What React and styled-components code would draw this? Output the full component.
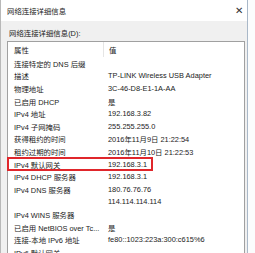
import React from 'react';
import styled, {createGlobalStyle} from 'styled-components';

const Global = createGlobalStyle`
  html, body {
    margin: 0;
    padding: 0;
    background: #fbfcfd;
    overflow: hidden;
  }
  body {
    font-family: 'Segoe UI', 'Liberation Sans', 'Noto Sans CJK SC', sans-serif;
    color: #1b1b1b;
  }
`;

const Window = styled.div`
  width: 248px;
  height: 253px;
  border-left: 1px solid #b8b8b8;
  border-right: 1px solid #a9b8c8;
  box-sizing: border-box;
  background: #f0f0f0;
  display: flex;
  flex-direction: column;
  overflow: hidden;
`;

const TitleBar = styled.div`
  height: 21px;
  flex: none;
  background: #fff;
  display: flex;
  align-items: center;
  justify-content: space-between;
  padding: 0 4px 0 6px;
  font-size: 7.4px;
`;

const Close = styled.span`
  font-size: 10px;
  color: #333;
  line-height: 1;
`;

const Body = styled.div`
  flex: 1;
  padding: 6px 2px 0 6px;
  display: flex;
  flex-direction: column;
`;

const Caption = styled.div`
  font-size: 7.4px;
  height: 14px;
  line-height: 14px;
  padding-left: 2px;
`;

const List = styled.div`
  flex: 1;
  background: #fff;
  border: 1px solid #a0a0a0;
  border-bottom: none;
  font-size: 7.4px;
`;

const Row = styled.div`
  position: relative;
  display: grid;
  grid-template-columns: 95px 1fr;
  height: ${p => (p.$head ? '15px' : '12.6px')};
  align-items: center;
  white-space: nowrap;

  &::after {
    content: '';
    display: ${p => (p.$marked ? 'block' : 'none')};
    position: absolute;
    left: -1px;
    top: -1px;
    width: 146px;
    height: 14px;
    border: 2px solid #e0262b;
    box-sizing: border-box;
  }
`;

const Cell = styled.div`
  padding-left: ${p => (p.$value ? '5px' : '6px')};
  height: 100%;
  display: flex;
  align-items: center;
  border-left: ${p => (p.$sep ? '1px solid #e5e5e5' : 'none')};
  overflow: hidden;
`;

const rows = [
  ['连接特定的 DNS 后缀', ''],
  ['描述', 'TP-LINK Wireless USB Adapter'],
  ['物理地址', '3C-46-D8-E1-1A-AA'],
  ['已启用 DHCP', '是'],
  ['IPv4 地址', '192.168.3.82'],
  ['IPv4 子网掩码', '255.255.255.0'],
  ['获得租约的时间', '2016年11月9日 21:22:54'],
  ['租约过期的时间', '2016年11月10日 21:22:53'],
  ['IPv4 默认网关', '192.168.3.1', true],
  ['IPv4 DHCP 服务器', '192.168.3.1'],
  ['IPv4 DNS 服务器', '180.76.76.76'],
  ['', '114.114.114.114'],
  ['IPv4 WINS 服务器', ''],
  ['已启用 NetBIOS over Tc...', '是'],
  ['连接-本地 IPv6 地址', 'fe80::1023:223a:300:c615%6'],
  ['IPv6 默认网关', ''],
];

export default function App() {
  return (
    <>
      <Global />
      <Window>
        <TitleBar>
          <span>网络连接详细信息</span>
          <Close>✕</Close>
        </TitleBar>
        <Body>
          <Caption>网络连接详细信息(D):</Caption>
          <List>
            <Row $head>
              <Cell>属性</Cell>
              <Cell $value $sep>值</Cell>
            </Row>
            {rows.map(([k, v, marked], i) => (
              <Row key={i} $marked={marked}>
                <Cell>{k}</Cell>
                <Cell $value>{v}</Cell>
              </Row>
            ))}
          </List>
        </Body>
      </Window>
    </>
  );
}
